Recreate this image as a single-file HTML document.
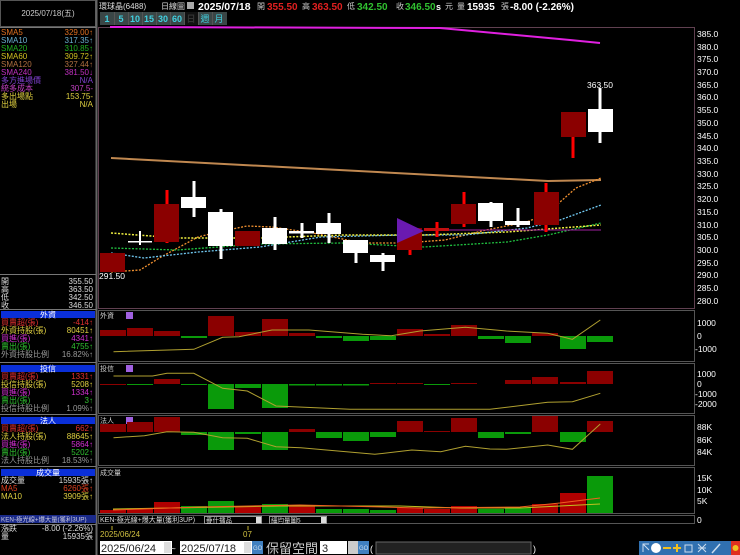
<!DOCTYPE html>
<html><head><meta charset="utf-8"><style>
html,body{margin:0;padding:0;background:#000;}
svg{display:block;}
text{font-family:"Liberation Sans","WenQuanYi Zen Hei","Noto Sans CJK TC",sans-serif;}
.s{font-size:8px;}
.ax{font-size:8.5px;fill:#fff;font-family:"Liberation Sans",sans-serif;}
</style></head><body>
<svg width="740" height="555" viewBox="0 0 740 555" xmlns="http://www.w3.org/2000/svg">
<rect width="740" height="555" fill="#000"/>
<rect x="0.5" y="0.5" width="95" height="26" fill="#000" stroke="#555"/>
<text x="48" y="16" class="s" fill="#ccc" text-anchor="middle">2025/07/18(五)</text>
<line x1="96.5" y1="0" x2="96.5" y2="555" stroke="#666" stroke-width="2"/>
<line x1="0" y1="27.5" x2="96" y2="27.5" stroke="#777"/>
<g class="s">
<text x="1" y="35" fill="#e07020">SMA5</text><text x="93" y="35" fill="#e07020" text-anchor="end">329.00↑</text>
<text x="1" y="43" fill="#6ab0d0">SMA10</text><text x="93" y="43" fill="#6ab0d0" text-anchor="end">317.35↑</text>
<text x="1" y="51" fill="#20b020">SMA20</text><text x="93" y="51" fill="#20b020" text-anchor="end">310.85↑</text>
<text x="1" y="59" fill="#d0c020">SMA60</text><text x="93" y="59" fill="#d0c020" text-anchor="end">309.72↑</text>
<text x="1" y="67" fill="#b07040">SMA120</text><text x="93" y="67" fill="#b07040" text-anchor="end">327.44↑</text>
<text x="1" y="75" fill="#c030c0">SMA240</text><text x="93" y="75" fill="#c030c0" text-anchor="end">381.50↓</text>
<text x="1" y="83" fill="#8040d0">多方進場價</text><text x="93" y="83" fill="#8040d0" text-anchor="end">N/A</text>
<text x="1" y="91" fill="#c040c0">統多成本</text><text x="93" y="91" fill="#c040c0" text-anchor="end">307.5-</text>
<text x="1" y="99" fill="#e0d040">多出場點</text><text x="93" y="99" fill="#e0d040" text-anchor="end">153.75-</text>
<text x="1" y="107" fill="#e0d040">出場</text><text x="93" y="107" fill="#e0d040" text-anchor="end">N/A</text>
</g>
<line x1="0" y1="274.5" x2="96" y2="274.5" stroke="#777"/>
<g class="s" fill="#ddd">
<text x="1" y="284">開</text><text x="93" y="284" text-anchor="end">355.50</text>
<text x="1" y="292">高</text><text x="93" y="292" text-anchor="end">363.50</text>
<text x="1" y="300">低</text><text x="93" y="300" text-anchor="end">342.50</text>
<text x="1" y="308">收</text><text x="93" y="308" text-anchor="end">346.50</text>
</g>
<g class="s">
<line x1="0" y1="309.5" x2="96" y2="309.5" stroke="#777"/>
<rect x="1" y="311" width="94" height="7" fill="#0a2fd8"/><text x="48" y="317.5" fill="#fff" text-anchor="middle">外資</text>
<text x="1" y="325" fill="#e03030">買賣超(張)</text><text x="93" y="325" fill="#e03030" text-anchor="end">-414↑</text>
<text x="1" y="333" fill="#e0d040">外資持股(張)</text><text x="93" y="333" fill="#e0d040" text-anchor="end">80451↑</text>
<text x="1" y="341" fill="#d030d0">買進(張)</text><text x="93" y="341" fill="#d030d0" text-anchor="end">4341↑</text>
<text x="1" y="349" fill="#30c030">賣出(張)</text><text x="93" y="349" fill="#30c030" text-anchor="end">4755↑</text>
<text x="1" y="357" fill="#999">外資持股比例</text><text x="93" y="357" fill="#999" text-anchor="end">16.82%↑</text>
<line x1="0" y1="362.5" x2="96" y2="362.5" stroke="#777"/>
<rect x="1" y="365" width="94" height="7" fill="#0a2fd8"/><text x="48" y="371.5" fill="#fff" text-anchor="middle">投信</text>
<text x="1" y="379" fill="#e03030">買賣超(張)</text><text x="93" y="379" fill="#e03030" text-anchor="end">1331↑</text>
<text x="1" y="387" fill="#e0d040">投信持股(張)</text><text x="93" y="387" fill="#e0d040" text-anchor="end">5208↑</text>
<text x="1" y="395" fill="#d030d0">買進(張)</text><text x="93" y="395" fill="#d030d0" text-anchor="end">1334↑</text>
<text x="1" y="403" fill="#30c030">賣出(張)</text><text x="93" y="403" fill="#30c030" text-anchor="end">3↑</text>
<text x="1" y="411" fill="#999">投信持股比例</text><text x="93" y="411" fill="#999" text-anchor="end">1.09%↑</text>
<line x1="0" y1="414.5" x2="96" y2="414.5" stroke="#777"/>
<rect x="1" y="417" width="94" height="7" fill="#0a2fd8"/><text x="48" y="423.5" fill="#fff" text-anchor="middle">法人</text>
<text x="1" y="431" fill="#e03030">買賣超(張)</text><text x="93" y="431" fill="#e03030" text-anchor="end">662↑</text>
<text x="1" y="439" fill="#e0d040">法人持股(張)</text><text x="93" y="439" fill="#e0d040" text-anchor="end">88645↑</text>
<text x="1" y="447" fill="#d030d0">買進(張)</text><text x="93" y="447" fill="#d030d0" text-anchor="end">5864↑</text>
<text x="1" y="455" fill="#30c030">賣出(張)</text><text x="93" y="455" fill="#30c030" text-anchor="end">5202↑</text>
<text x="1" y="463" fill="#999">法人持股比例</text><text x="93" y="463" fill="#999" text-anchor="end">18.53%↑</text>
<line x1="0" y1="466.5" x2="96" y2="466.5" stroke="#777"/>
<rect x="1" y="469" width="94" height="7" fill="#0a2fd8"/><text x="48" y="475.5" fill="#fff" text-anchor="middle">成交量</text>
<text x="1" y="483" fill="#ddd">成交量</text><text x="93" y="483" fill="#ddd" text-anchor="end">15935張↑</text>
<text x="1" y="491" fill="#e04020">MA5</text><text x="93" y="491" fill="#e04020" text-anchor="end">6260張↑</text>
<text x="1" y="499" fill="#e0d040">MA10</text><text x="93" y="499" fill="#e0d040" text-anchor="end">3909張↑</text>
<rect x="0" y="515" width="96" height="8" fill="#1a2a8a"/><text x="1" y="521.5" fill="#ccd" font-size="6.3">KEN-極光線+爆大量(獲利3UP)</text>
<line x1="0" y1="524.5" x2="96" y2="524.5" stroke="#777"/>
<text x="1" y="531" fill="#ddd">漲跌</text><text x="93" y="531" fill="#ddd" text-anchor="end">-8.00 (-2.26%)</text>
<text x="1" y="539" fill="#ddd">量</text><text x="93" y="539" fill="#ddd" text-anchor="end">15935張</text>
</g>

<text x="99" y="9" class="s" fill="#ddd">環球晶(6488)</text>
<text x="161" y="9" class="s" fill="#ddd">日線圖</text>
<rect x="187" y="2" width="7" height="7" fill="#aaa"/>
<text x="198" y="10" font-size="10.5" font-weight="bold" fill="#fff">2025/07/18</text>
<text x="257" y="9" class="s" fill="#ccc">開</text><text x="267" y="10" font-size="10" font-weight="bold" fill="#e02020">355.50</text>
<text x="302" y="9" class="s" fill="#ccc">高</text><text x="312" y="10" font-size="10" font-weight="bold" fill="#e02020">363.50</text>
<text x="347" y="9" class="s" fill="#ccc">低</text><text x="357" y="10" font-size="10" font-weight="bold" fill="#30c030">342.50</text>
<text x="396" y="9" class="s" fill="#ccc">收</text><text x="405" y="10" font-size="10" font-weight="bold" fill="#30c030">346.50</text>
<text x="436" y="10" font-size="9" font-weight="bold" fill="#fff">s</text><text x="445" y="9" class="s" fill="#ccc">元</text>
<text x="457" y="9" class="s" fill="#ccc">量</text><text x="467" y="10" font-size="10" font-weight="bold" fill="#fff">15935</text>
<text x="501" y="9" class="s" fill="#ccc">張</text><text x="510" y="10" font-size="10" font-weight="bold" fill="#fff">-8.00 (-2.26%)</text>
<g font-size="9" font-weight="bold" fill="#40d0e0" text-anchor="middle">
<rect x="100" y="12" width="127" height="13" fill="#3a4646"/>
<g stroke="#555"><line x1="114.5" y1="12" x2="114.5" y2="25"/><line x1="128.5" y1="12" x2="128.5" y2="25"/><line x1="142.5" y1="12" x2="142.5" y2="25"/><line x1="156.5" y1="12" x2="156.5" y2="25"/><line x1="170.5" y1="12" x2="170.5" y2="25"/><line x1="184.5" y1="12" x2="184.5" y2="25"/><line x1="198.5" y1="12" x2="198.5" y2="25"/><line x1="212.5" y1="12" x2="212.5" y2="25"/></g>
<rect x="185" y="12" width="13" height="13" fill="#111"/>
<text x="107" y="22">1</text><text x="121" y="22">5</text><text x="135" y="22">10</text><text x="149" y="22">15</text><text x="163" y="22">30</text><text x="177" y="22">60</text><text x="191" y="22" fill="#333">日</text><text x="205" y="22" font-weight="normal">週</text><text x="219" y="22" font-weight="normal">月</text>
</g>

<g fill="none" stroke="#555">
<rect x="98.5" y="27.5" width="596" height="281" stroke="#604050"/>
<rect x="98.5" y="310.5" width="596" height="51"/>
<rect x="98.5" y="363.5" width="596" height="50"/>
<rect x="98.5" y="415.5" width="596" height="50"/>
<rect x="98.5" y="467.5" width="596" height="46"/>
<rect x="98.5" y="515.5" width="596" height="8"/>
</g>
<g class="ax">
<text x="697" y="37">385.0</text><text x="697" y="50">380.0</text><text x="697" y="62">375.0</text><text x="697" y="75">370.0</text><text x="697" y="88">365.0</text><text x="697" y="100">360.0</text><text x="697" y="113">355.0</text><text x="697" y="126">350.0</text><text x="697" y="139">345.0</text><text x="697" y="151">340.0</text><text x="697" y="164">335.0</text><text x="697" y="177">330.0</text><text x="697" y="189">325.0</text><text x="697" y="202">320.0</text><text x="697" y="215">315.0</text><text x="697" y="228">310.0</text><text x="697" y="240">305.0</text><text x="697" y="253">300.0</text><text x="697" y="266">295.0</text><text x="697" y="278">290.0</text><text x="697" y="291">285.0</text><text x="697" y="304">280.0</text>
<text x="697" y="326">1000</text><text x="697" y="339">0</text><text x="695" y="352">-1000</text>
<text x="697" y="377">1000</text><text x="697" y="387">0</text><text x="695" y="397">-1000</text><text x="695" y="407">-2000</text>
<text x="697" y="430">88K</text><text x="697" y="443">86K</text><text x="697" y="455">84K</text>
<text x="697" y="481">15K</text><text x="697" y="493">10K</text><text x="697" y="504">5K</text>
<text x="697" y="523">0</text>
</g>

<polyline points="110,27 440,28 570,40 600,43" fill="none" stroke="#e020e0" stroke-width="2"/>
<polyline points="111,158 548,181 601,180" fill="none" stroke="#c08850" stroke-width="2"/>
<polyline points="111,272 140,270 161,257 198,237 218,232 247,226 272,227 313,233 362,243 404,243 445,240 486,230 527,222 548,213 560,202 576,188 601,178" fill="none" stroke="#f09030" stroke-width="1.3" stroke-dasharray="2,1.5"/>
<polyline points="111,253 144,258 198,252 260,247 321,237 404,235 465,235 527,228 560,220 601,205" fill="none" stroke="#70c8f0" stroke-width="1.3" stroke-dasharray="2,1.5"/>
<polyline points="111,248 177,250 260,244 342,243 424,247 507,242 548,235 601,223" fill="none" stroke="#20c040" stroke-width="1.3" stroke-dasharray="2,1.5"/>
<polyline points="111,233 177,238 260,238 342,235 424,235 507,232 601,225" fill="none" stroke="#f0f040" stroke-width="1.5" stroke-dasharray="2,1.5"/>
<line x1="424" y1="230" x2="601" y2="230" stroke="#a020a0"/>
<g>
<rect x="100" y="253" width="25" height="19" fill="#8b0000"/>
<line x1="140" y1="231" x2="140" y2="245" stroke="#fff" stroke-width="2"/><rect x="128" y="241" width="24" height="1.5" fill="#fff"/>
<line x1="167" y1="190" x2="167" y2="243" stroke="#f00" stroke-width="3"/><rect x="154" y="204" width="25" height="38" fill="#8b0000"/>
<line x1="194" y1="181" x2="194" y2="217" stroke="#fff" stroke-width="3"/><rect x="181" y="197" width="25" height="11" fill="#fff"/>
<line x1="221" y1="209" x2="221" y2="259" stroke="#fff" stroke-width="3"/><rect x="208" y="212" width="25" height="34" fill="#fff"/>
<rect x="235" y="231" width="25" height="15" fill="#8b0000"/>
<line x1="275" y1="217" x2="275" y2="250" stroke="#fff" stroke-width="3"/><rect x="262" y="228" width="25" height="16" fill="#fff"/>
<line x1="302" y1="223" x2="302" y2="238" stroke="#fff" stroke-width="3"/><rect x="289" y="231" width="25" height="2.5" fill="#fff"/>
<line x1="329" y1="213" x2="329" y2="243" stroke="#fff" stroke-width="3"/><rect x="316" y="223" width="25" height="11" fill="#fff"/>
<line x1="356" y1="240" x2="356" y2="263" stroke="#fff" stroke-width="3"/><rect x="343" y="240" width="25" height="13" fill="#fff"/>
<line x1="383" y1="253" x2="383" y2="271" stroke="#fff" stroke-width="3"/><rect x="370" y="255" width="25" height="7" fill="#fff"/>
<line x1="410" y1="240" x2="410" y2="255" stroke="#f00" stroke-width="3"/><rect x="397" y="228" width="25" height="22" fill="#8b0000"/>
<polygon points="397,218 424,231 397,243" fill="#6a1ab0"/>
<line x1="437" y1="222" x2="437" y2="237" stroke="#f00" stroke-width="3"/><rect x="424" y="228" width="25" height="3" fill="#c01010"/>
<line x1="464" y1="192" x2="464" y2="227" stroke="#f00" stroke-width="3"/><rect x="451" y="204" width="25" height="20" fill="#8b0000"/>
<line x1="491" y1="202" x2="491" y2="227" stroke="#fff" stroke-width="3"/><rect x="478" y="203" width="25" height="18" fill="#fff"/>
<line x1="518" y1="208" x2="518" y2="227" stroke="#fff" stroke-width="3"/><rect x="505" y="221" width="25" height="4" fill="#fff"/>
<line x1="546" y1="183" x2="546" y2="232" stroke="#f00" stroke-width="3"/><rect x="534" y="192" width="25" height="33" fill="#8b0000"/>
<line x1="573" y1="130" x2="573" y2="158" stroke="#f00" stroke-width="3"/><rect x="561" y="112" width="25" height="25" fill="#8b0000"/>
<line x1="600" y1="88" x2="600" y2="143" stroke="#fff" stroke-width="3"/><rect x="588" y="109" width="25" height="23" fill="#fff"/>
</g>
<text x="587" y="88" class="ax" fill="#fff">363.50</text>
<text x="99" y="279" class="ax" fill="#fff">291.50</text>

<text x="100" y="318" font-size="7" fill="#ccc">外資</text><rect x="126" y="312" width="7" height="7" fill="#a060e0"/>
<g>
<rect x="100" y="330" width="26" height="6" fill="#8b0000"/><rect x="127" y="328" width="26" height="8" fill="#8b0000"/><rect x="154" y="331" width="26" height="5" fill="#8b0000"/><rect x="181" y="336" width="26" height="2" fill="#0a9a0a"/><rect x="208" y="316" width="26" height="20" fill="#8b0000"/><rect x="235" y="332" width="26" height="4" fill="#8b0000"/><rect x="262" y="319" width="26" height="17" fill="#8b0000"/><rect x="289" y="333" width="26" height="3" fill="#8b0000"/><rect x="316" y="336" width="26" height="2" fill="#0a9a0a"/><rect x="343" y="336" width="26" height="5" fill="#0a9a0a"/><rect x="370" y="336" width="26" height="4" fill="#0a9a0a"/><rect x="397" y="329" width="26" height="7" fill="#8b0000"/><rect x="424" y="334" width="26" height="2" fill="#8b0000"/><rect x="451" y="325" width="26" height="11" fill="#8b0000"/><rect x="478" y="336" width="26" height="3" fill="#0a9a0a"/><rect x="505" y="336" width="26" height="7" fill="#0a9a0a"/><rect x="532" y="333" width="26" height="3" fill="#8b0000"/><rect x="560" y="336" width="26" height="13" fill="#0a9a0a"/><rect x="587" y="336" width="26" height="6" fill="#0a9a0a"/>
</g>
<polyline points="113.5,351.7 193.8,349.3 222.6,337.3 239,336.7 272,330 309,330 362.5,334.3 391.3,335.7 420,331 465.4,327.3 506.5,331 547.7,333.3 572.4,339.3 600.3,320" fill="none" stroke="#b0a030"/>
<text x="100" y="371" font-size="7" fill="#ccc">投信</text><rect x="126" y="365" width="7" height="7" fill="#a060e0"/>
<g>
<rect x="100" y="384" width="26" height="1" fill="#8b0000"/><rect x="127" y="384" width="26" height="1" fill="#0a9a0a"/><rect x="154" y="379" width="26" height="5" fill="#8b0000"/><rect x="181" y="384" width="26" height="1" fill="#0a9a0a"/><rect x="208" y="384" width="26" height="25" fill="#0a9a0a"/><rect x="235" y="384" width="26" height="4" fill="#0a9a0a"/><rect x="262" y="384" width="26" height="24" fill="#0a9a0a"/><rect x="289" y="384" width="26" height="1.5" fill="#0a9a0a"/><rect x="316" y="384" width="26" height="1.5" fill="#0a9a0a"/><rect x="343" y="384" width="26" height="1.5" fill="#0a9a0a"/><rect x="370" y="383" width="26" height="1" fill="#8b0000"/><rect x="397" y="383" width="26" height="1" fill="#8b0000"/><rect x="424" y="384" width="26" height="1" fill="#0a9a0a"/><rect x="451" y="383" width="26" height="1" fill="#8b0000"/><rect x="505" y="380" width="26" height="4" fill="#8b0000"/><rect x="532" y="377" width="26" height="7" fill="#8b0000"/><rect x="560" y="382" width="26" height="2" fill="#8b0000"/><rect x="587" y="371" width="26" height="13" fill="#8b0000"/>
</g>
<polyline points="113.5,376 152.6,376 167,373.3 193.8,373.3 222.6,388.3 247.3,391 276,406 350.1,409.3 490,409.3 547.7,402.3 572.4,401.7 600.3,393.3" fill="none" stroke="#b0a030"/>
<text x="100" y="423" font-size="7" fill="#ccc">法人</text><rect x="126" y="417" width="7" height="7" fill="#a060e0"/>
<g>
<rect x="100" y="424" width="26" height="8" fill="#8b0000"/><rect x="127" y="422" width="26" height="10" fill="#8b0000"/><rect x="154" y="417" width="26" height="15" fill="#8b0000"/><rect x="181" y="432" width="26" height="3" fill="#0a9a0a"/><rect x="208" y="432" width="26" height="18" fill="#0a9a0a"/><rect x="235" y="432" width="26" height="2" fill="#0a9a0a"/><rect x="262" y="432" width="26" height="18" fill="#0a9a0a"/><rect x="289" y="429" width="26" height="3" fill="#8b0000"/><rect x="316" y="432" width="26" height="6" fill="#0a9a0a"/><rect x="343" y="432" width="26" height="9" fill="#0a9a0a"/><rect x="370" y="432" width="26" height="5" fill="#0a9a0a"/><rect x="397" y="421" width="26" height="11" fill="#8b0000"/><rect x="424" y="431" width="26" height="1" fill="#8b0000"/><rect x="451" y="418" width="26" height="14" fill="#8b0000"/><rect x="478" y="432" width="26" height="6" fill="#0a9a0a"/><rect x="505" y="432" width="26" height="2" fill="#0a9a0a"/><rect x="532" y="416" width="26" height="16" fill="#8b0000"/><rect x="560" y="432" width="26" height="10" fill="#0a9a0a"/><rect x="587" y="421" width="26" height="11" fill="#8b0000"/>
</g>
<polyline points="113.5,437.7 144.4,435.7 167,431.7 193.8,432.3 222.6,437.7 247.3,438.3 276,446.7 300.8,447.7 374.8,454.3 411.9,450 440.7,451.7 465.4,446.3 490,449 506.5,449.3 547.7,445 572.4,449.3 600.3,424" fill="none" stroke="#b0a030"/>
<text x="100" y="475" font-size="7" fill="#ccc">成交量</text>
<g>
<rect x="100" y="510" width="26" height="3" fill="#b00000"/><rect x="127" y="509" width="26" height="4" fill="#b00000"/><rect x="154" y="502" width="26" height="11" fill="#b00000"/><rect x="181" y="506" width="26" height="7" fill="#0a9a0a"/><rect x="208" y="501" width="26" height="12" fill="#0a9a0a"/><rect x="235" y="507" width="26" height="6" fill="#b00000"/><rect x="262" y="504" width="26" height="9" fill="#0a9a0a"/><rect x="289" y="505" width="26" height="8" fill="#b00000"/><rect x="316" y="509" width="26" height="4" fill="#0a9a0a"/><rect x="343" y="509" width="26" height="4" fill="#0a9a0a"/><rect x="370" y="510" width="26" height="3" fill="#0a9a0a"/><rect x="397" y="508" width="26" height="5" fill="#b00000"/><rect x="424" y="509" width="26" height="4" fill="#b00000"/><rect x="451" y="506" width="26" height="7" fill="#b00000"/><rect x="478" y="509" width="26" height="4" fill="#0a9a0a"/><rect x="505" y="508" width="26" height="5" fill="#0a9a0a"/><rect x="532" y="504" width="26" height="9" fill="#b00000"/><rect x="560" y="493" width="26" height="20" fill="#b00000"/><rect x="587" y="476" width="26" height="37" fill="#0a9a0a"/>
</g>
<polyline points="113,509 280,506 400,506 460,508 520,508 560,506 600,504" fill="none" stroke="#c0c020"/>
<polyline points="113,510 200,507 300,505 420,508 520,507 560,503 600,498" fill="none" stroke="#f06020"/>

<text x="100" y="522" font-size="7" fill="#ddd">KEN-極光線+爆大量(獲利3UP)</text>
<rect x="204.5" y="516.5" width="57" height="7" fill="#000" stroke="#999"/><text x="206" y="522.5" font-size="6.5" fill="#ddd">疊什擂品</text><rect x="256" y="517" width="5" height="6" fill="#ddd"/>
<rect x="269.5" y="516.5" width="57" height="7" fill="#000" stroke="#999"/><text x="271" y="522.5" font-size="6.5" fill="#ddd">細均量圖5</text><rect x="321" y="517" width="5" height="6" fill="#ddd"/>
<line x1="112" y1="526" x2="112" y2="530" stroke="#c0b030"/><line x1="248" y1="526" x2="248" y2="530" stroke="#c0b030"/>
<text x="100" y="537" font-size="8" fill="#d0c040">2025/06/24</text><text x="243" y="537" font-size="8" fill="#d0c040">07</text>

<rect x="100" y="541" width="72" height="13" fill="#fff"/><text x="101" y="552" font-size="11" fill="#222">2025/06/24</text>
<rect x="164" y="542" width="7" height="11" fill="#ddd"/>
<text x="170" y="552" font-size="10" fill="#ddd">~</text>
<rect x="180" y="541" width="72" height="13" fill="#fff"/><text x="181" y="552" font-size="11" fill="#222">2025/07/18</text>
<rect x="244" y="542" width="7" height="11" fill="#ddd"/>
<rect x="252" y="541" width="11" height="13" fill="#4080c0"/><text x="253" y="550" font-size="6" fill="#cde">GO</text>
<text x="266" y="553" font-size="13" fill="#ccc">保留空間</text>
<rect x="320" y="541" width="27" height="13" fill="#fff"/><text x="322" y="552" font-size="11" fill="#222">3</text>
<rect x="348" y="541" width="10" height="13" fill="#ccc"/>
<rect x="358" y="541" width="11" height="13" fill="#4080c0"/><text x="359" y="550" font-size="6" fill="#cde">GO</text>
<text x="370" y="552" font-size="9" fill="#fff">(</text>
<rect x="376" y="542" width="155" height="12" fill="#222" stroke="#666"/>
<text x="533" y="552" font-size="9" fill="#fff">)</text>
<g>
<rect x="639" y="541" width="101" height="14" fill="#3070b0"/>
<path d="M643 552 L643 544 L649 544 M643 544 L649 550" stroke="#cde" fill="none"/>
<circle cx="656" cy="548" r="5" fill="#fff"/>
<rect x="663" y="547" width="8" height="2" fill="#f0c020"/>
<rect x="673" y="547" width="8" height="2" fill="#f0c020"/><rect x="676" y="544" width="2" height="8" fill="#f0c020"/>
<path d="M685 552 L685 545 L692 545 L692 552 Z" stroke="#cde" fill="none"/>
<path d="M698 544 L706 552 M698 552 L706 544 M698 548 L706 548" stroke="#cde" fill="none"/>
<path d="M712 553 L720 544" stroke="#cde" fill="none" stroke-width="1.5"/>
<rect x="731" y="541" width="9" height="14" fill="#e03020"/><circle cx="735.5" cy="548" r="3" fill="#f0c020"/>
</g>
</svg>
</body></html>
